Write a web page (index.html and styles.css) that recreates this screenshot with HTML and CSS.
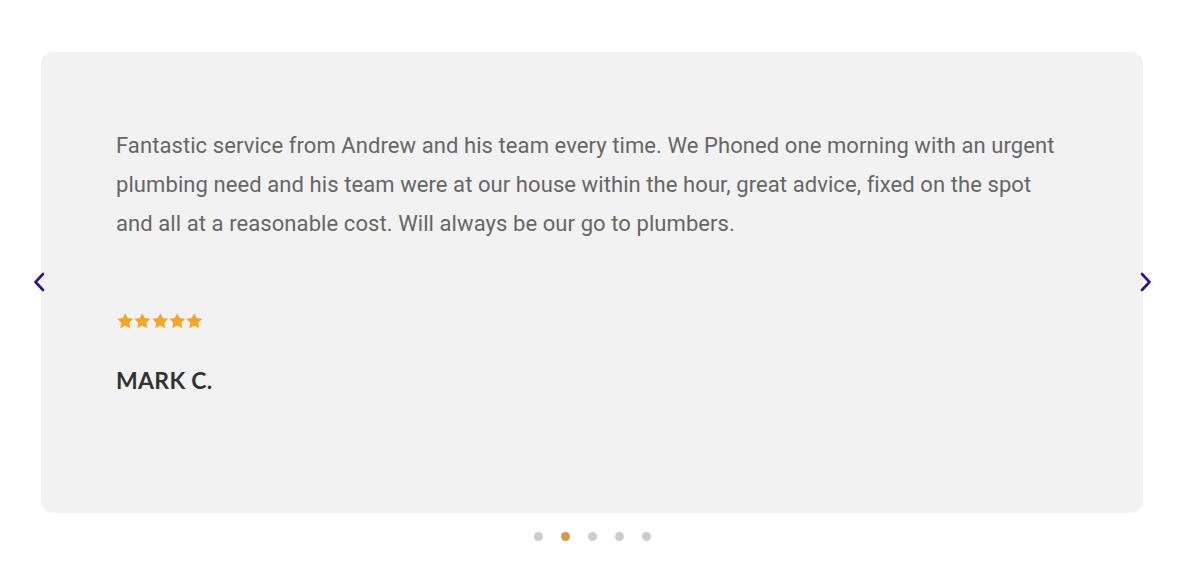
FILE: index.html
```html
<!DOCTYPE html>
<html>
<head>
<meta charset="utf-8">
<link rel="stylesheet" href="styles.css">
</head>
<body>
<section class="slider">
  <div class="card">
    <p class="quote">Fantastic service from Andrew and his team every time. We Phoned one morning with an urgent plumbing need and his team were at our house within the hour, great advice, fixed on the spot and all at a reasonable cost. Will always be our go to plumbers.</p>
    <div class="stars">
      <svg viewBox="0 0 24 24"><path d="M12 1.5l3.2 6.4 7.1 1-5.1 5 1.2 7.1L12 17.6 5.6 21l1.2-7.1-5.1-5 7.1-1z"/></svg>
      <svg viewBox="0 0 24 24"><path d="M12 1.5l3.2 6.4 7.1 1-5.1 5 1.2 7.1L12 17.6 5.6 21l1.2-7.1-5.1-5 7.1-1z"/></svg>
      <svg viewBox="0 0 24 24"><path d="M12 1.5l3.2 6.4 7.1 1-5.1 5 1.2 7.1L12 17.6 5.6 21l1.2-7.1-5.1-5 7.1-1z"/></svg>
      <svg viewBox="0 0 24 24"><path d="M12 1.5l3.2 6.4 7.1 1-5.1 5 1.2 7.1L12 17.6 5.6 21l1.2-7.1-5.1-5 7.1-1z"/></svg>
      <svg viewBox="0 0 24 24"><path d="M12 1.5l3.2 6.4 7.1 1-5.1 5 1.2 7.1L12 17.6 5.6 21l1.2-7.1-5.1-5 7.1-1z"/></svg>
    </div>
    <div class="name">MARK C.</div>
    <button class="arrow prev" aria-label="Previous"><svg viewBox="0 0 12 20"><path d="M10 2L2.5 10l7.5 8"/></svg></button>
    <button class="arrow next" aria-label="Next"><svg viewBox="0 0 12 20"><path d="M2 2l7.5 8L2 18"/></svg></button>
  </div>
  <div class="dots">
    <span class="dot"></span>
    <span class="dot active"></span>
    <span class="dot"></span>
    <span class="dot"></span>
    <span class="dot"></span>
  </div>
</section>
</body>
</html>
```
FILE: styles.css
```css
html, body {
  margin: 0;
  padding: 0;
  background: #ffffff;
}
.slider {
  padding: 52px 39px 0 41px;
}
.card {
  position: relative;
  box-sizing: border-box;
  height: 461px;
  background: #f2f2f2;
  border-radius: 12px;
  padding: 74px 75px 0 75px;
}
.quote {
  margin: 0;
  font-family: Roboto, "Liberation Sans", sans-serif;
  font-size: 22px;
  line-height: 39px;
  letter-spacing: 0.08px;
  color: #666666;
  max-width: 942px;
}
.stars {
  display: flex;
  gap: 0;
  margin-top: 69px;
  height: 18px;
}
.stars svg {
  width: 18.5px;
  height: 18.5px;
  margin-right: -1.2px;
  fill: #f5a623;
}
.name {
  margin-top: 36px;
  font-family: Lato, "Open Sans", sans-serif;
  font-weight: 700;
  font-size: 23px;
  line-height: 28px;
  color: #333333;
  letter-spacing: 0.3px;
}
.arrow {
  position: absolute;
  top: 220px;
  width: 14px;
  height: 22px;
  padding: 0;
  border: 0;
  background: transparent;
}
.arrow svg {
  width: 12px;
  height: 20px;
  fill: none;
  stroke: #2b1296;
  stroke-width: 2.6;
  stroke-linecap: round;
  stroke-linejoin: round;
}
.prev { left: -9px; }
.next { right: -10px; }
.dots {
  display: flex;
  justify-content: center;
  gap: 18px;
  margin-top: 19px;
}
.dot {
  width: 9px;
  height: 9px;
  border-radius: 50%;
  background: #cccccc;
}
.dot.active {
  background: #d49a48;
}
```
